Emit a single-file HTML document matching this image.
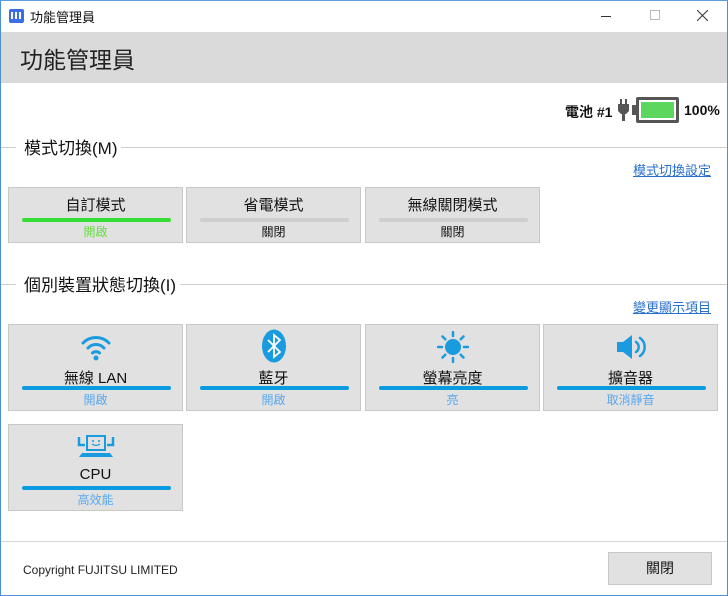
<!DOCTYPE html>
<html><head><meta charset="utf-8"><style>
*{margin:0;padding:0;box-sizing:border-box}
body{width:728px;height:596px;overflow:hidden;background:#fff;font-family:"Liberation Sans","Noto Sans CJK TC",sans-serif;position:relative;color:#111}
.a{position:absolute}
.frame{left:0;top:0;width:728px;height:596px;border:1px solid #4a90d9;border-top:1px solid #5a9de0}
.btn{position:absolute;width:175px;background:#e1e1e1;border:1px solid #c8c8c8}
.btn .t{position:absolute;left:0;right:0;text-align:center;font-size:15px}
.btn .bar{position:absolute;left:13px;width:149px;height:4px;border-radius:2px}
.btn .s{position:absolute;left:0;right:0;text-align:center;font-size:12px}
.sec{font-size:17px;left:24px;background:#fff;padding-right:4px}
.line{left:0;right:0;height:1px;background:#cfcfcf}
.link{font-size:13px;color:#2a6fcc;text-decoration:underline;right:17px}
</style></head><body>
<div class="a" style="left:0;top:0;width:728px;height:32px;background:#fff"></div>
<div class="a" style="left:9px;top:9px;width:15px;height:14px;background:#3b6ee8;border-radius:2px"></div>
<div class="a" style="left:11px;top:12px;width:11px;height:7px;background:repeating-linear-gradient(90deg,#fff 0 2px,transparent 2px 4px)"></div>
<div class="a" style="left:30px;top:7px;font-size:13px">功能管理員</div>
<div class="a" style="left:601px;top:16px;width:10px;height:1px;background:#333"></div>
<div class="a" style="left:650px;top:10px;width:10px;height:10px;border:1px solid #bbb"></div>
<svg class="a" style="left:697px;top:10px" width="11" height="11" viewBox="0 0 11 11"><path d="M0 0L11 11M11 0L0 11" stroke="#333" stroke-width="1"/></svg>
<div class="a" style="left:1px;top:32px;width:726px;height:51px;background:#dadada"></div>
<div class="a" style="left:20px;top:41px;font-size:23px;color:#222">功能管理員</div>
<div class="a" style="left:565px;top:102px;font-size:14px;font-weight:bold">電池 #1</div>
<svg class="a" style="left:617px;top:99px" width="14" height="22" viewBox="0 0 14 22"><rect x="3" y="0" width="2" height="5" fill="#555"/><rect x="8" y="0" width="2" height="5" fill="#555"/><path d="M1 5h11v7l-3 3h-1v7h-3v-7h-1l-3-3z" fill="#555"/></svg>
<div class="a" style="left:632px;top:105px;width:4px;height:10px;background:#555"></div>
<div class="a" style="left:636px;top:97px;width:43px;height:26px;border:3px solid #555;border-radius:2px;background:#fff"></div>
<div class="a" style="left:641px;top:102px;width:33px;height:16px;background:#5cd65c"></div>
<div class="a" style="left:684px;top:102px;font-size:14px;font-weight:bold">100%</div>

<div class="a line" style="top:147px"></div>
<div class="a sec" style="top:134px;left:16px;padding:0 4px 0 8px">模式切換(M)</div>
<div class="a link" style="top:160px">模式切換設定</div>

<div class="btn" style="left:8px;top:187px;height:56px"><div class="t" style="top:6px">自訂模式</div><div class="bar" style="top:30px;background:#33dd33"></div><div class="s" style="top:35px;color:#66dd44">開啟</div></div>
<div class="btn" style="left:186px;top:187px;height:56px"><div class="t" style="top:6px">省電模式</div><div class="bar" style="top:30px;background:#cfcfcf"></div><div class="s" style="top:35px">關閉</div></div>
<div class="btn" style="left:365px;top:187px;height:56px"><div class="t" style="top:6px">無線關閉模式</div><div class="bar" style="top:30px;background:#cfcfcf"></div><div class="s" style="top:35px">關閉</div></div>

<div class="a line" style="top:284px"></div>
<div class="a sec" style="top:271px;left:16px;padding:0 4px 0 8px">個別裝置狀態切換(I)</div>
<div class="a link" style="top:297px">變更顯示項目</div>

<div class="btn" style="left:8px;top:324px;height:87px">
<svg class="a" style="left:71px;top:7px" width="32" height="30" viewBox="0 0 32 30"><g fill="none" stroke="#1a9be0" stroke-width="3" stroke-linecap="round"><path d="M3 11a18 18 0 0 1 26 0"/><path d="M8 16a11 11 0 0 1 16 0"/><path d="M12.5 21a5 5 0 0 1 7 0"/></g><circle cx="16" cy="26" r="2.5" fill="#1a9be0"/></svg>
<div class="t" style="top:42px">無線 LAN</div><div class="bar" style="top:61px;background:#0a9be0"></div><div class="s" style="top:66px;color:#5aa8ee">開啟</div></div>
<div class="btn" style="left:186px;top:324px;height:87px">
<svg class="a" style="left:74px;top:4px" width="26" height="34" viewBox="0 0 26 34"><ellipse cx="13" cy="17" rx="12" ry="16.5" fill="#1a9be0"/><path d="M7 11l12 12-6 5V6l6 5-12 12" fill="none" stroke="#fff" stroke-width="1.8"/></svg>
<div class="t" style="top:42px">藍牙</div><div class="bar" style="top:61px;background:#0a9be0"></div><div class="s" style="top:66px;color:#5aa8ee">開啟</div></div>
<div class="btn" style="left:365px;top:324px;height:87px">
<svg class="a" style="left:71px;top:6px" width="32" height="32" viewBox="0 0 32 32"><circle cx="16" cy="16" r="8" fill="#1a9be0"/><g stroke="#1a9be0" stroke-width="2.5" stroke-linecap="round"><path d="M16 1v4M16 27v4M1 16h4M27 16h4M5.5 5.5l2.8 2.8M23.7 23.7l2.8 2.8M5.5 26.5l2.8-2.8M23.7 8.3l2.8-2.8"/></g></svg>
<div class="t" style="top:42px">螢幕亮度</div><div class="bar" style="top:61px;background:#0a9be0"></div><div class="s" style="top:66px;color:#5aa8ee">亮</div></div>
<div class="btn" style="left:543px;top:324px;height:87px">
<svg class="a" style="left:71px;top:8px" width="32" height="28" viewBox="0 0 32 28"><path d="M2 9h6l9-7v24l-9-7H2z" fill="#1a9be0"/><g fill="none" stroke="#1a9be0" stroke-width="2.5" stroke-linecap="round"><path d="M21 9a6 6 0 0 1 0 10"/><path d="M25 5a11 11 0 0 1 0 18"/></g></svg>
<div class="t" style="top:42px">擴音器</div><div class="bar" style="top:61px;background:#0a9be0"></div><div class="s" style="top:66px;color:#5aa8ee">取消靜音</div></div>

<div class="btn" style="left:8px;top:424px;height:87px">
<svg class="a" style="left:67px;top:8px" width="40" height="30" viewBox="0 0 40 30"><rect x="10" y="2" width="20" height="16" fill="#1a9be0"/><rect x="12" y="4" width="16" height="12" fill="#e1e1e1"/><circle cx="17" cy="8" r="1" fill="#1a9be0"/><circle cx="23" cy="8" r="1" fill="#1a9be0"/><path d="M16 11q4 3 8 0" fill="none" stroke="#1a9be0" stroke-width="1.2"/><path d="M6 20h28l3 4H3z" fill="#1a9be0"/><path d="M3 4v8h6M37 4v8h-6" fill="none" stroke="#1a9be0" stroke-width="2.5"/></svg>
<div class="t" style="top:41px">CPU</div><div class="bar" style="top:61px;background:#0a9be0"></div><div class="s" style="top:66px;color:#5aa8ee">高效能</div></div>

<div class="a line" style="top:541px;background:#d5d5d5"></div>
<div class="a" style="left:23px;top:563px;font-size:12px;color:#222">Copyright FUJITSU LIMITED</div>
<div class="a" style="left:608px;top:552px;width:104px;height:33px;background:#e1e1e1;border:1px solid #c8c8c8;text-align:center;font-size:14px;line-height:31px">關閉</div>
<div class="a frame"></div>
</body></html>
